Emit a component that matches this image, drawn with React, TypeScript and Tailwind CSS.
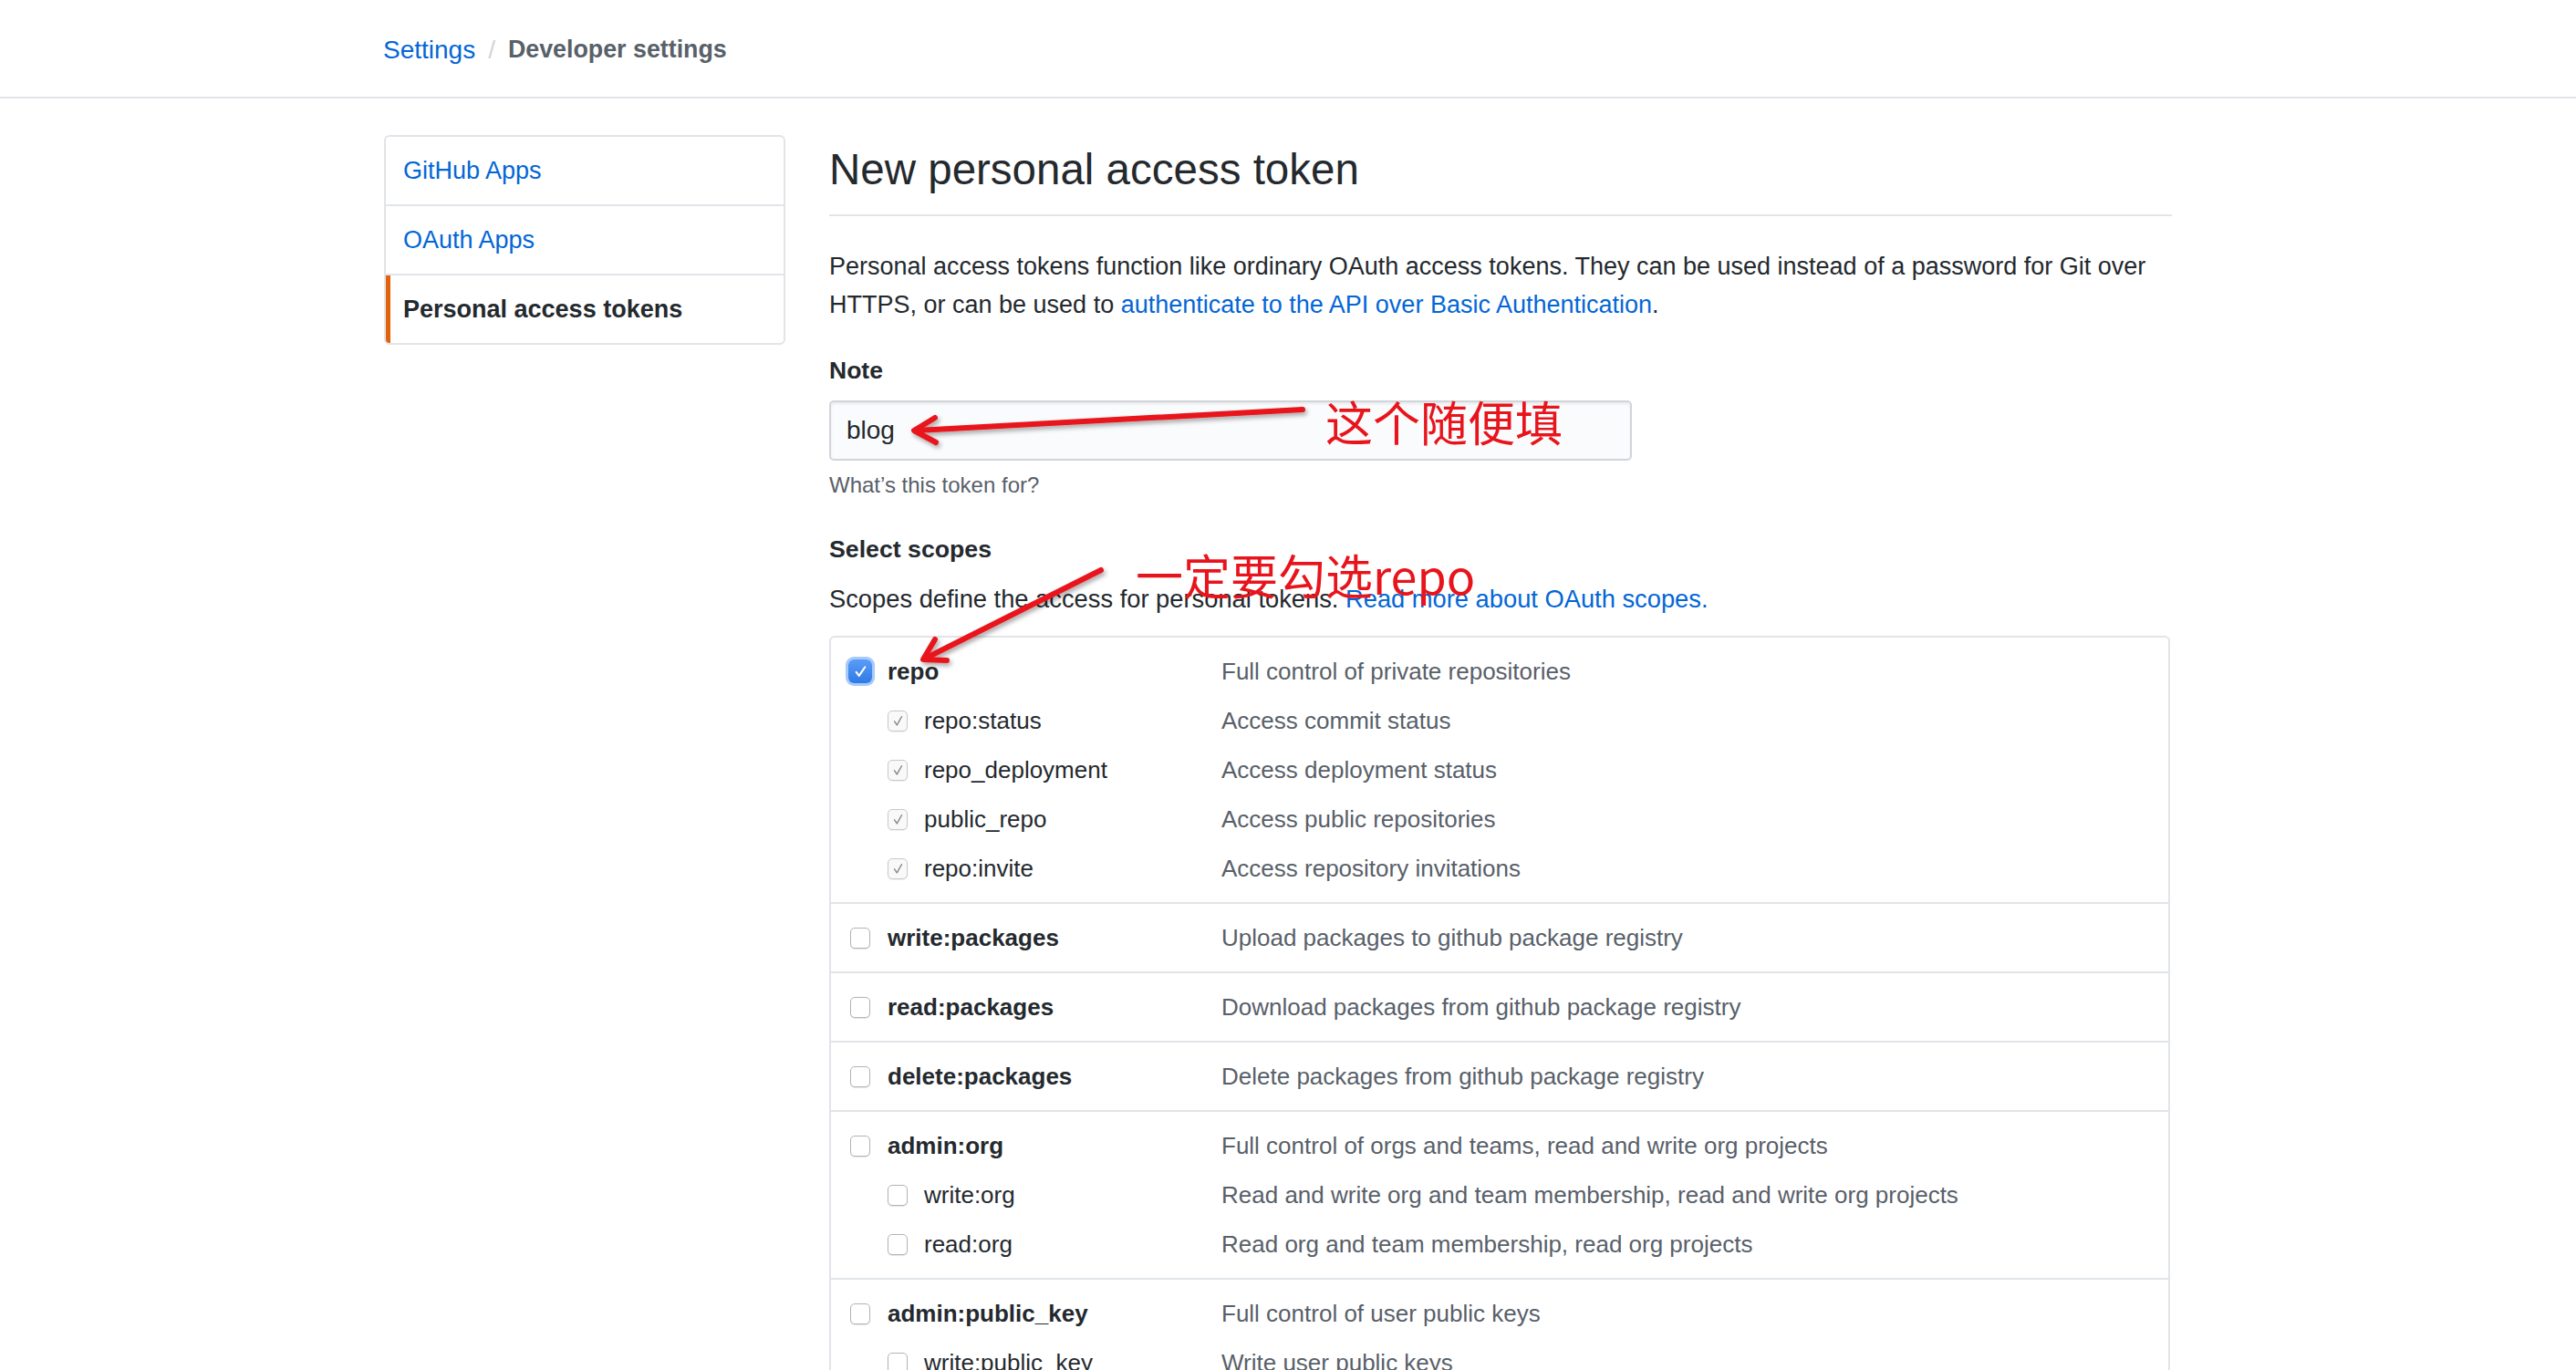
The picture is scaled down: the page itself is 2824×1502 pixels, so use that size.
import clsx from "clsx";

interface SubScope {
    name: string;
    desc: string;
    checked?: boolean;
}

interface Scope extends SubScope {
    children?: SubScope[];
}

const scopes: Scope[] = [
    {
        name: "repo",
        desc: "Full control of private repositories",
        checked: true,
        children: [
            { name: "repo:status", desc: "Access commit status", checked: true },
            { name: "repo_deployment", desc: "Access deployment status", checked: true },
            { name: "public_repo", desc: "Access public repositories", checked: true },
            { name: "repo:invite", desc: "Access repository invitations", checked: true },
        ],
    },
    { name: "write:packages", desc: "Upload packages to github package registry" },
    { name: "read:packages", desc: "Download packages from github package registry" },
    { name: "delete:packages", desc: "Delete packages from github package registry" },
    {
        name: "admin:org",
        desc: "Full control of orgs and teams, read and write org projects",
        children: [
            { name: "write:org", desc: "Read and write org and team membership, read and write org projects" },
            { name: "read:org", desc: "Read org and team membership, read org projects" },
        ],
    },
    {
        name: "admin:public_key",
        desc: "Full control of user public keys",
        children: [
            { name: "write:public_key", desc: "Write user public keys" },
            { name: "read:public_key", desc: "Read user public keys" },
        ],
    },
    {
        name: "admin:repo_hook",
        desc: "Full control of repository hooks",
        children: [
            { name: "write:repo_hook", desc: "Write repository hooks" },
            { name: "read:repo_hook", desc: "Read repository hooks" },
        ],
    },
];

function CheckBox({ state }: { state: "on" | "sub" | "off" }) {
    if (state === "on") {
        return (
            <span className="-mx-[2px] flex h-[26px] w-[26px] items-center justify-center rounded-[6px] bg-gradient-to-b from-[#5a9cf8] to-[#2f7ae5] shadow-[0_0_0_3px_rgba(80,150,245,0.5)]">
                <svg viewBox="0 0 24 24" className="h-[21px] w-[21px]" fill="none">
                    <path d="M6.5 12.5 L10 17 L17.5 6" stroke="#fff" strokeWidth="2.4" strokeLinecap="round" strokeLinejoin="round" />
                </svg>
            </span>
        );
    }
    if (state === "sub") {
        return (
            <span className="flex h-[23px] w-[22px] items-center justify-center rounded-[5px] border border-[#c8c8c8] bg-[#f9f9f9] shadow-[0_1px_1px_rgba(0,0,0,0.06)]">
                <svg viewBox="0 0 24 24" className="h-[19px] w-[19px]" fill="none">
                    <path d="M7 12.5 L10.5 17.5 L17 6" stroke="#8a8a8a" strokeWidth="1.9" strokeLinecap="round" strokeLinejoin="round" />
                </svg>
            </span>
        );
    }
    return <span className="block h-[23px] w-[22px] rounded-[5px] border border-[#b3b3b3] bg-white shadow-[0_1px_1px_rgba(0,0,0,0.1)]" />;
}

function ScopeRow({ item, child }: { item: SubScope; child?: boolean }) {
    const state = item.checked ? (child ? "sub" : "on") : "off";
    return (
        <div className="flex h-[54px] items-center">
            <div className={clsx("flex w-[428px] items-center", child ? "gap-[18px] pl-[62px]" : "gap-[19px] pl-[21px]")}>
                <CheckBox state={state} />
                <span className={clsx("text-[26px] text-[#24292e]", !child && "font-bold")}>{item.name}</span>
            </div>
            <span className="text-[26px] text-[#586069]">{item.desc}</span>
        </div>
    );
}

export default function App() {
    return (
        <div className="relative min-h-screen overflow-hidden bg-white font-['Liberation_Sans',Arial,sans-serif] text-[#24292e]">
            {/* breadcrumb header */}
            <header className="flex h-[108px] items-center border-b-2 border-[#e1e4e8] pt-[3px]">
                <div className="ml-[420px] flex items-center gap-[14px]">
                    <span className="text-[28px] text-[#0366d6]">Settings</span>
                    <span className="text-[28px] text-[#d1d5da]">/</span>
                    <span className="text-[26.8px] font-bold text-[#586069]">Developer settings</span>
                </div>
            </header>

            <div className="ml-[421px] flex w-[1960px] gap-[48px] pt-[40px]">
                {/* sidebar */}
                <nav className="w-[440px] self-start overflow-hidden rounded-[6px] border-2 border-[#e1e4e8] text-[27px]">
                    <div className="flex h-[74px] items-center pl-[19px] text-[#0366d6]">GitHub Apps</div>
                    <div className="flex h-[76px] items-center border-t-2 border-[#e1e4e8] pl-[19px] text-[#0366d6]">OAuth Apps</div>
                    <div className="flex h-[76px] items-center border-t-2 border-[#e1e4e8] pl-[19px] font-bold shadow-[inset_5px_0_0_#e36209]">
                        Personal access tokens
                    </div>
                </nav>

                {/* main column */}
                <main className="flex-1">
                    <h1 className="mt-[8px] border-b-2 border-[#e1e4e8] pb-[20px] text-[47.5px] leading-[59px] font-normal">
                        New personal access token
                    </h1>
                    <p className="mt-[34px] text-[27px] leading-[42px]">
                        Personal access tokens function like ordinary OAuth access tokens. They can be used instead of a password for Git over
                        HTTPS, or can be used to <span className="text-[#0366d6]">authenticate to the API over Basic Authentication</span>.
                    </p>

                    <div className="mt-[33px] text-[26.5px] leading-[36px] font-bold">Note</div>
                    <div className="mt-[15px] flex h-[66px] w-[880px] items-center rounded-[5px] border-2 border-[#d1d5da] bg-[#fafbfc] pl-[17px] text-[28px] shadow-[inset_0_2px_3px_rgba(27,31,35,0.075)]">
                        blog
                    </div>
                    <div className="mt-[12px] text-[24px] leading-[30px] text-[#586069]">What’s this token for?</div>

                    <div className="mt-[37px] text-[26.7px] leading-[36px] font-bold">Select scopes</div>
                    <p className="mt-[16px] text-[27.3px] leading-[42px]">
                        Scopes define the access for personal tokens. <span className="text-[#0366d6]">Read more about OAuth scopes.</span>
                    </p>

                    <div className="mt-[19px] w-[1470px] rounded-[6px] border-2 border-[#e1e4e8]">
                        {scopes.map((scope, i) => (
                            <div key={scope.name} className={clsx("py-[10px]", i > 0 && "border-t-2 border-[#e1e4e8]")}>
                                <ScopeRow item={scope} />
                                {scope.children?.map((c) => (
                                    <ScopeRow key={c.name} item={c} child />
                                ))}
                            </div>
                        ))}
                    </div>
                </main>
            </div>

            {/* red annotations drawn over the page */}
            <svg className="pointer-events-none absolute top-0 left-0" width="2824" height="1502" fill="none">
                <defs>
                    <filter id="sh" x="-10%" y="-50%" width="120%" height="200%">
                        <feDropShadow dx="2" dy="3" stdDeviation="2.5" floodColor="#000" floodOpacity="0.35" />
                    </filter>
                </defs>
                <g stroke="#e8141c" strokeWidth="6" strokeLinecap="round" strokeLinejoin="round" filter="url(#sh)">
                    <path d="M1428 449 L1004 472" />
                    <path d="M1025 458 L1002 472 L1026 485" />
                    <path d="M1207 625 L1014 722" />
                    <path d="M1025 701 L1012 723 L1038 724" />
                </g>
            </svg>
            <span className="absolute top-[436px] left-[1453px] font-['Noto_Sans_CJK_SC',sans-serif] text-[52px] leading-none text-[#e8141c]">
                这个随便填
            </span>
            <span className="absolute top-[604px] left-[1245px] font-['Noto_Sans_CJK_SC',sans-serif] text-[52px] leading-none text-[#e8141c]">
                一定要勾选repo
            </span>
        </div>
    );
}
